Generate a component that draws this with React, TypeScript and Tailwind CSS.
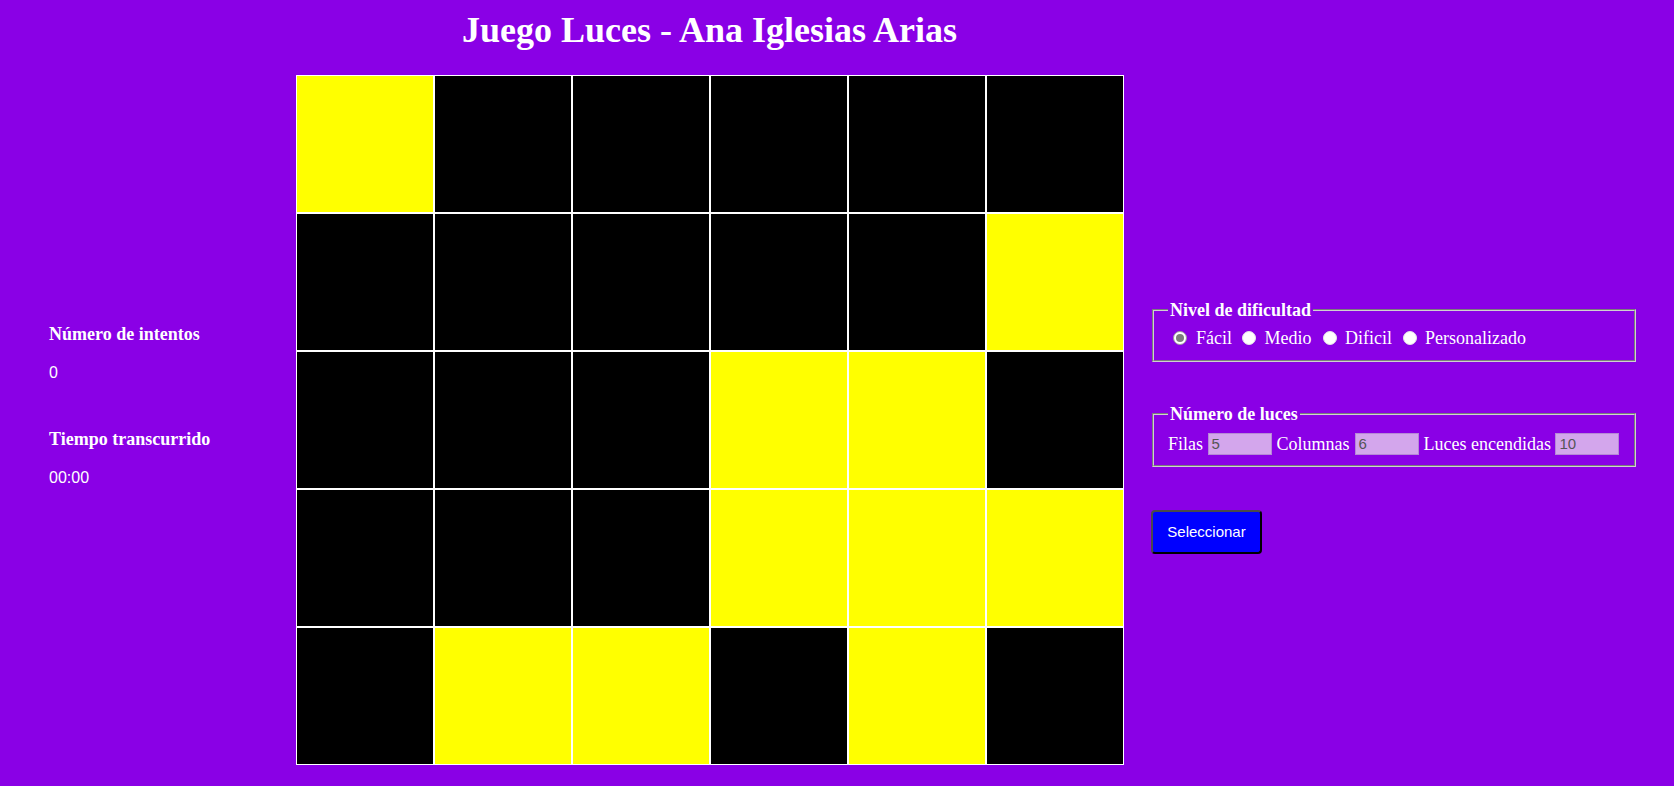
import React from "react";

const lit = [
  [1, 0, 0, 0, 0, 0],
  [0, 0, 0, 0, 0, 1],
  [0, 0, 0, 1, 1, 0],
  [0, 0, 0, 1, 1, 1],
  [0, 1, 1, 0, 1, 0],
];

function Radio({ checked }: { checked?: boolean }) {
  return checked ? (
    <span className="inline-flex items-center justify-center w-[14px] h-[14px] rounded-full bg-white border border-[#9a9a9a] shrink-0">
      <span className="w-[8px] h-[8px] rounded-full bg-[#7d7d7d]" />
    </span>
  ) : (
    <span className="inline-block w-[14px] h-[14px] rounded-full bg-white border border-[#e6e6e6] shrink-0" />
  );
}

function Field({ value }: { value: string }) {
  return (
    <span className="flex items-center w-[64px] h-[22px] bg-[#d3a6ec] border border-[#b588d6] px-[3px] text-[15px] text-[#555] [font-family:'Liberation_Sans',Arial,sans-serif]">
      {value}
    </span>
  );
}

const sans = "[font-family:'Liberation_Sans',Arial,sans-serif]";

export default function App() {
  return (
    <div className="w-full h-[786px] overflow-hidden bg-[#8a00e6] text-white [font-family:'Liberation_Serif','Times_New_Roman',serif]">
      <div className="flex">
        {/* left */}
        <div className="w-[295px] pl-[49px] pt-[323px] flex flex-col">
          <div className="text-[18px] font-bold leading-[22px]">Número de intentos</div>
          <div className={`mt-[17px] text-[16px] leading-[22px] ${sans}`}>0</div>
          <div className="mt-[44px] text-[18px] font-bold leading-[22px]">Tiempo transcurrido</div>
          <div className={`mt-[17px] text-[16px] leading-[22px] ${sans}`}>00:00</div>
        </div>

        {/* middle */}
        <div className="w-[829px] flex flex-col items-center">
          <h1 className="mt-[12px] h-[37px] leading-[37px] text-[36px] font-bold whitespace-nowrap">
            Juego Luces - Ana Iglesias Arias
          </h1>
          <div className="mt-[26px] grid grid-cols-[repeat(6,138px)] w-[828px] ml-[1px]">
            {lit.flat().map((v, i) => (
              <div
                key={i}
                className={`h-[138px] border border-white ${v ? "bg-[#ffff00]" : "bg-black"}`}
              />
            ))}
          </div>
        </div>

        {/* right */}
        <div className="pl-[28px] pt-[300px] flex flex-col items-start">
          <fieldset className="w-[484px] border-2 [border-style:groove] border-[#d0d0d0] pl-[14px] pr-[14px] pt-[7px] pb-[12px] text-[18px]">
            <legend className="px-[2px] font-bold leading-[20.7px]">Nivel de dificultad</legend>
            <div className="flex items-center h-[20px] leading-[20px] whitespace-nowrap">
              <span className="ml-[5px] flex"><Radio checked /></span>
              <span className="ml-[9px]">Fácil</span>
              <span className="ml-[10px] flex"><Radio /></span>
              <span className="ml-[8.5px]">Medio</span>
              <span className="ml-[11px] flex"><Radio /></span>
              <span className="ml-[8.5px]">Dificil</span>
              <span className="ml-[10.5px] flex"><Radio /></span>
              <span className="ml-[8.5px]">Personalizado</span>
            </div>
          </fieldset>

          <fieldset className="mt-[42px] w-[484px] border-2 [border-style:groove] border-[#d0d0d0] pl-[14px] pr-[14px] pt-[9px] pb-[10px] text-[18px]">
            <legend className="px-[2px] font-bold leading-[20.7px]">Número de luces</legend>
            <div className="flex items-center h-[22px] leading-[22px] whitespace-nowrap">
              <span>Filas</span>
              <span className="ml-[4.5px]"><Field value="5" /></span>
              <span className="ml-[5px]">Columnas</span>
              <span className="ml-[5px]"><Field value="6" /></span>
              <span className="ml-[5px]">Luces encendidas</span>
              <span className="ml-[4.5px]"><Field value="10" /></span>
            </div>
          </fieldset>

          <button className={`mt-[43px] -ml-[1px] w-[111px] h-[44px] bg-[#0000ff] border-2 border-t-[#4a4a4a] border-l-[#4a4a4a] border-r-black border-b-black rounded-[4px] text-[15px] text-white ${sans}`}>
            Seleccionar
          </button>
        </div>
      </div>
    </div>
  );
}
